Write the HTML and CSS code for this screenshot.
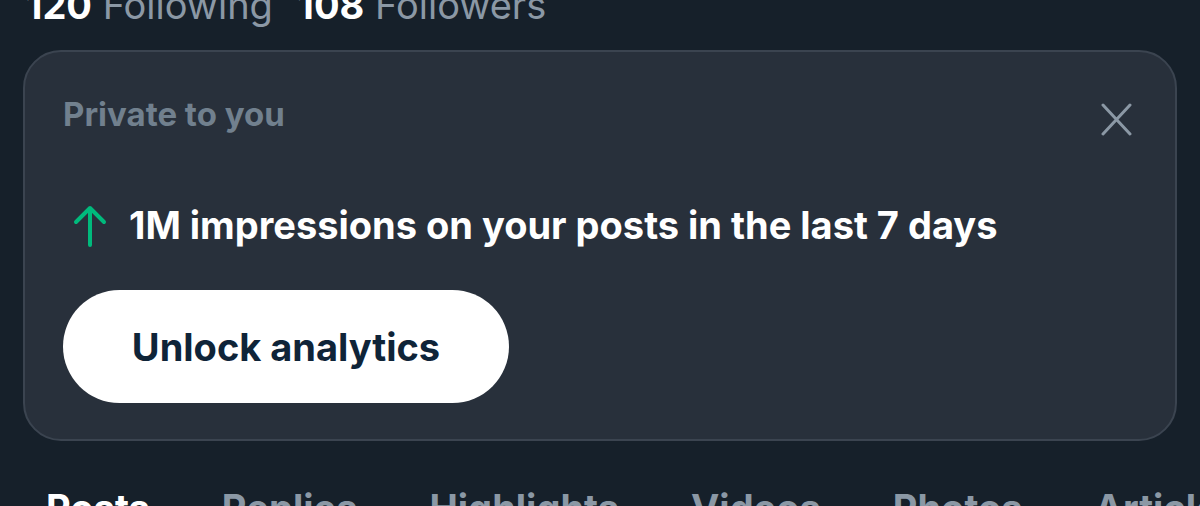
FILE: index.html
```html
<!DOCTYPE html>
<html lang="en">
<head>
<meta charset="utf-8">
<link rel="stylesheet" href="styles.css">
</head>
<body>
<div class="stats">
  <span class="num">120</span> <span class="label">Following</span>
  <span class="num second">108</span> <span class="label">Followers</span>
</div>
<section class="card">
  <div class="card-head">
    <div class="private">Private to you</div>
    <button class="close" aria-label="Close">
      <svg width="31" height="33" viewBox="0 0 31 33"><path d="M2 2 L29 31 M29 2 L2 31" stroke="#8b98a5" stroke-width="3" stroke-linecap="round" fill="none"/></svg>
    </button>
  </div>
  <div class="impressions">
    <svg class="arrow" width="34" height="42" viewBox="0 0 34 42"><path d="M17 40 V3 M3 17 L17 3 L31 17" stroke="#00ba7c" stroke-width="4" stroke-linecap="round" stroke-linejoin="round" fill="none"/></svg>
    <span>1M impressions on your posts in the last 7 days</span>
  </div>
  <button class="unlock">Unlock analytics</button>
</section>
<nav class="tabs">
  <span class="tab active">Posts</span>
  <span class="tab">Replies</span>
  <span class="tab">Highlights</span>
  <span class="tab">Videos</span>
  <span class="tab">Photos</span>
  <span class="tab">Articles</span>
</nav>
</body>
</html>
```
FILE: styles.css
```css
html, body {
  margin: 0;
  padding: 0;
  background: #16202a;
  height: 506px;
  overflow: hidden;
}
body {
  font-family: Inter, "Noto Sans", sans-serif;
  color: #e7e9ea;
}
.stats {
  margin-top: -17px;
  padding-left: 26px;
  font-size: 38px;
  line-height: 44px;
  white-space: nowrap;
}
.num {
  color: #ffffff;
  font-weight: 700;
}
.second {
  margin-left: 14px;
}
.label {
  color: #8b98a5;
  font-weight: 400;
}
.card {
  margin: 23px 23px 0;
  height: 391px;
  box-sizing: border-box;
  background: #28303b;
  border: 2px solid #3b4450;
  border-radius: 38px;
  padding: 0 38px;
  display: flex;
  flex-direction: column;
  align-items: flex-start;
}
.card-head {
  align-self: stretch;
  display: flex;
  justify-content: space-between;
  align-items: center;
  margin-top: 39px;
}
.private {
  color: #71808e;
  font-weight: 700;
  font-size: 33px;
  line-height: 38px;
}
.close {
  background: none;
  border: 0;
  padding: 0;
  margin-right: 5px;
  margin-top: 12px;
  width: 31px;
  height: 33px;
}
.impressions {
  display: flex;
  align-items: center;
  gap: 22px;
  margin-top: 66px;
  margin-left: 10px;
  color: #ffffff;
  font-weight: 700;
  font-size: 38px;
  line-height: 46px;
}
.arrow {
  flex: none;
  margin-top: 2px;
}
.unlock {
  margin-top: 42px;
  width: 446px;
  height: 113px;
  border: 0;
  border-radius: 57px;
  background: #ffffff;
  color: #0f2438;
  font-family: Inter, "Noto Sans", sans-serif;
  font-weight: 700;
  font-size: 38px;
}
.tabs {
  display: flex;
  padding-left: 46px;
  margin-top: 45px;
  font-size: 38px;
  font-weight: 700;
  line-height: 44px;
  white-space: nowrap;
  gap: 72px;
}
.tab {
  color: #8b98a5;
}
.tab.active {
  color: #ffffff;
}
```
